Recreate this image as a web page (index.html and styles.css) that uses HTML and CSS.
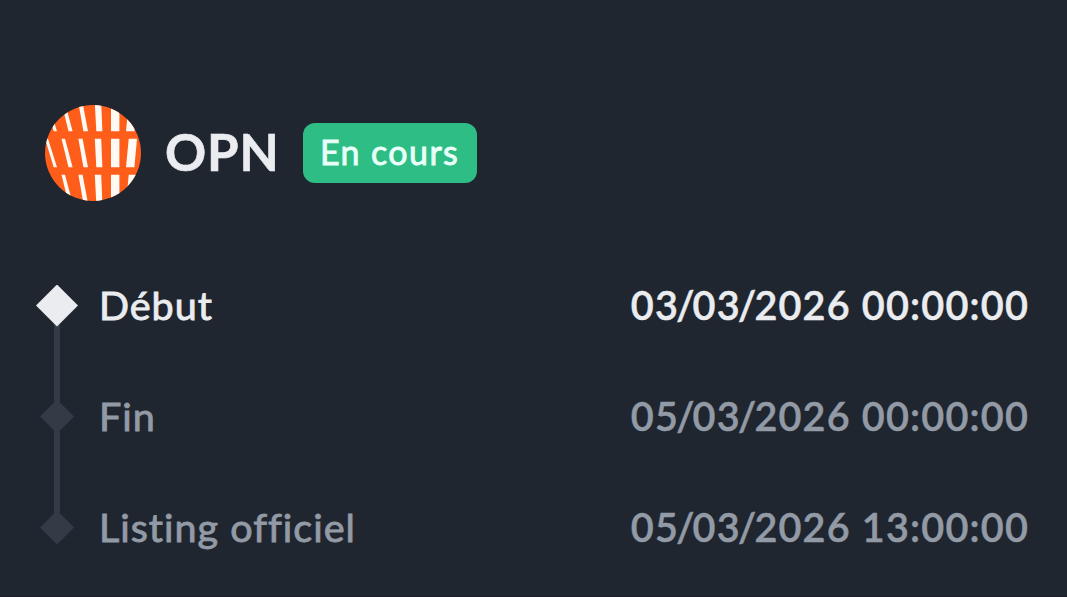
FILE: index.html
```
<!DOCTYPE html>
<html lang="fr">

<head>
    <meta charset="UTF-8">
    <meta name="viewport" content="width=device-width, initial-scale=1.0">
    <title>OPN</title>
    <link rel="stylesheet" href="styles.css">
</head>

<body>
    <header class="token">
        <svg class="token-logo" viewBox="0 0 96 96" aria-hidden="true">
            <defs>
                <clipPath id="circle">
                    <circle cx="48" cy="48" r="48" />
                </clipPath>
                <g id="bars">
                    <path d="M0 0H3L12 28.5H8.7Z M16.5 0H20L27.6 28.5H23.5Z M33.4 0H37.6L43 28.5H38.4Z M49.8 0H56.2L57.4 28.5H51.3Z M66 0H74.4V28.5H66Z M83.7 0H92L89.4 28.5H81Z" />
                </g>
            </defs>
            <g clip-path="url(#circle)">
                <rect width="96" height="96" fill="#ff5e1a" />
                <g fill="#fffaf3">
                    <use href="#bars" y="-2.2" />
                    <use href="#bars" y="33.8" />
                    <use href="#bars" y="69.8" />
                </g>
            </g>
        </svg>
        <h1 class="token-name">OPN</h1>
        <span class="badge">En cours</span>
    </header>

    <ul class="timeline">
        <li class="step active">
            <span class="marker"></span>
            <span class="label">Début</span>
            <time class="date">0<i>3/</i>0<i>3/</i>2026 00:00:00</time>
        </li>
        <li class="step">
            <span class="marker"></span>
            <span class="label">Fin</span>
            <time class="date">0<i>5/</i>0<i>3/</i>2026 00:00:00</time>
        </li>
        <li class="step">
            <span class="marker"></span>
            <span class="label">Listing officiel</span>
            <time class="date">0<i>5/</i>0<i>3/</i>2026 13:00:00</time>
        </li>
    </ul>
</body>

</html>
```
FILE: styles.css
```
* {
    box-sizing: border-box;
}

body {
    margin: 0;
    padding: 105px 38px 0 36px;
    height: 597px;
    overflow: hidden;
    border-bottom: 1px solid #1e1d29;
    background: #202630;
    color: #eaecef;
    font-family: Lato, "Liberation Sans", sans-serif;
    font-variant-ligatures: none;
}

.token {
    display: flex;
    align-items: center;
    height: 96px;
    padding-left: 9px;
}

.token-logo {
    width: 96px;
    height: 96px;
}

.token-name {
    width: 113px;
    margin: 0 25px 0 24px;
    padding-bottom: 3px;
    font-size: 51px;
    font-weight: 700;
    line-height: 60px;
    letter-spacing: 0.8px;
    white-space: nowrap;
    -webkit-text-stroke: 0.6px;
}

.badge {
    width: 174px;
    height: 60px;
    padding-left: 17px;
    border-radius: 12px;
    background: #2ebd85;
    color: #e9fff8;
    font-size: 34px;
    line-height: 57px;
    letter-spacing: 1.4px;
    white-space: nowrap;
    -webkit-text-stroke: 0.9px;
}

.timeline {
    margin: 49px 0 0;
    padding: 0;
    list-style: none;
}

.step {
    position: relative;
    display: flex;
    align-items: center;
    height: 111px;
    color: #929aa5;
    font-size: 39.5px;
    white-space: nowrap;
}

.step.active {
    color: #eaecef;
}

/* connecting line */
.step + .step::before {
    content: "";
    position: absolute;
    top: -55px;
    left: 18px;
    width: 6px;
    height: 111px;
    background: #333b47;
}

.marker {
    width: 42px;
    height: 42px;
    margin-right: 21px;
    padding: 4px;
    position: relative;
    z-index: 1;
}

.marker::before {
    content: "";
    display: block;
    height: 100%;
    background: #333b47;
    clip-path: polygon(50% 0, 100% 50%, 50% 100%, 0 50%);
}

.active .marker {
    padding: 0;
}

.active .marker::before {
    background: #eaecef;
}

.label {
    padding-bottom: 3px;
    letter-spacing: 1px;
    -webkit-text-stroke: 0.9px;
}

.date {
    margin-left: auto;
    padding-bottom: 3px;
    font-weight: 600;
    letter-spacing: 1.2px;
    -webkit-text-stroke: 0.5px;
}

/* tighter spacing around the slashes */
.date i {
    font-style: normal;
    letter-spacing: -1.7px;
}
```
